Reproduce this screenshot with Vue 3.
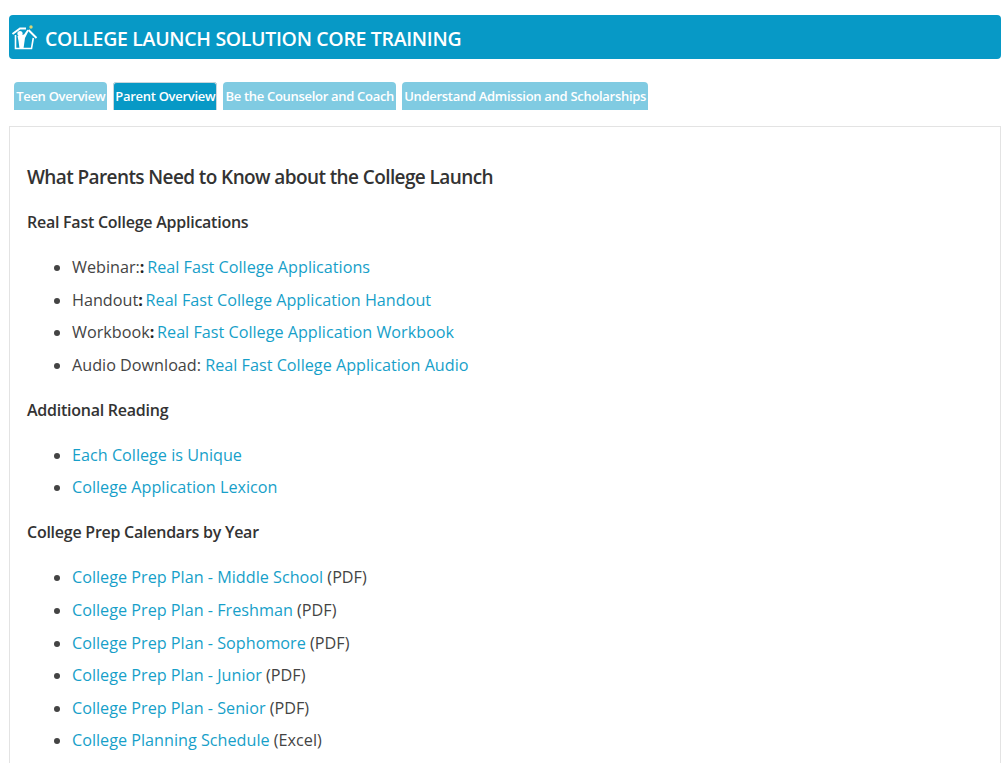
<script setup>
const tabs = [
  { label: 'Teen Overview' },
  { label: 'Parent Overview', active: true },
  { label: 'Be the Counselor and Coach' },
  { label: 'Understand Admission and Scholarships' }
]
const sections = [
  { title: 'Real Fast College Applications', items: [
    { pre: 'Webinar:', mark: ':', link: 'Real Fast College Applications' },
    { pre: 'Handout', mark: ':', link: 'Real Fast College Application Handout' },
    { pre: 'Workbook', mark: ':', link: 'Real Fast College Application Workbook' },
    { pre: 'Audio Download:', link: 'Real Fast College Application Audio' }
  ]},
  { title: 'Additional Reading', items: [
    { link: 'Each College is Unique' },
    { link: 'College Application Lexicon' }
  ]},
  { title: 'College Prep Calendars by Year', items: [
    { link: 'College Prep Plan - Middle School', post: ' (PDF)' },
    { link: 'College Prep Plan - Freshman', post: ' (PDF)' },
    { link: 'College Prep Plan - Sophomore', post: ' (PDF)' },
    { link: 'College Prep Plan - Junior', post: ' (PDF)' },
    { link: 'College Prep Plan - Senior', post: ' (PDF)' },
    { link: 'College Planning Schedule', post: ' (Excel)' }
  ]}
]
</script>

<template>
  <div class="page">
    <header class="banner">
      <svg class="logo" width="28" height="26" viewBox="0 0 28 26" fill="none">
        <path d="M1.5 10 L9 4.5 H15" stroke="#fff" stroke-width="2"/>
        <path d="M17.5 6 L25.5 14" stroke="#fff" stroke-width="2"/>
        <path d="M4.5 11 V24.5 H20.5 L22.3 14" stroke="#fff" stroke-width="1.6"/>
        <circle cx="9" cy="9.5" r="2.6" fill="#fff"/>
        <path d="M6.5 12 L13 10.5 L16.5 5.5 L17.5 7 L14 14 L12.5 24.5 H8.5 L7.5 17 Z" fill="#fff"/>
        <circle cx="20" cy="3" r="1.7" fill="#dcd774"/>
      </svg>
      <h1>COLLEGE LAUNCH SOLUTION CORE TRAINING</h1>
    </header>
    <nav class="tabs">
      <a v-for="t in tabs" :key="t.label" class="tab" :class="{ active: t.active }">{{ t.label }}</a>
    </nav>
    <main class="panel">
      <h2>What Parents Need to Know about the College Launch</h2>
      <template v-for="s in sections" :key="s.title">
        <h3>{{ s.title }}</h3>
        <ul>
          <li v-for="i in s.items" :key="i.link"><template v-if="i.pre">{{ i.pre }}<b v-if="i.mark">{{ i.mark }}</b>{{ ' ' }}</template><a>{{ i.link }}</a>{{ i.post }}</li>
        </ul>
      </template>
    </main>
  </div>
</template>

<style>
html, body { margin: 0; overflow: hidden; background: #fff; }
</style>

<style scoped>
.page { height: 763px; overflow: hidden; padding: 15px 5px 0 9px; box-sizing: border-box; font-family: "Open Sans", "Noto Sans", sans-serif; color: #333; }
.banner { height: 44px; background: #0799c6; border-radius: 4px; display: flex; align-items: center; padding-left: 2px; gap: 6px; color: #fff; }
h1 { margin: 3px 0 0; font-size: 19.5px; font-weight: 600; letter-spacing: -0.32px; }
.tabs { display: flex; gap: 5.8px; padding: 23px 0 0 5px; }
.tab { height: 28px; line-height: 28px; padding: 0 2.2px; background: #80cbe2; color: #fff; font-size: 13px; font-weight: 600; letter-spacing: -0.3px; border-radius: 4px 4px 0 0; }
.tab.active { background: #0799c6; box-shadow: inset 0 1px 0 #c9d6db, inset 1px 0 0 #c9d6db, inset -1px 0 0 #c9d6db; }
.panel { margin-top: 16px; border: 1px solid #e3e3e3; padding: 34px 17px 0; height: 700px; }
h2 { margin: 0 0 17px; font-size: 19px; font-weight: 600; line-height: 32px; letter-spacing: -0.6px; }
h3 { margin: 0 0 16px; font-size: 16px; font-weight: 600; line-height: 25px; letter-spacing: -0.25px; }
ul { margin: 0 0 16.4px; padding: 0 0 0 45px; }
li { font-size: 16.2px; line-height: 32.6px; color: #444; }
li b { font-weight: 700; color: #222; margin-right: -1.5px; }
li a { color: #179fc9; }
</style>
